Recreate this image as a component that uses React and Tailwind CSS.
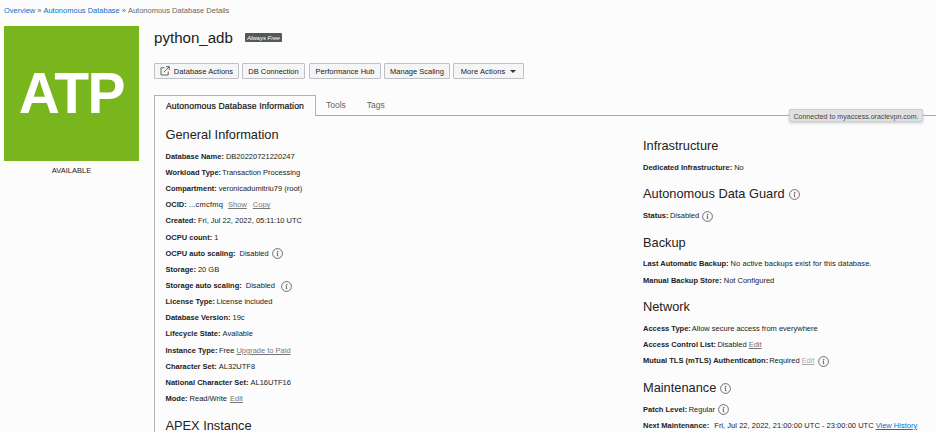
import React from "react";

function Info({ className = "" }) {
  return (
    <svg className={"shrink-0 w-[11px] h-[11px] " + className} viewBox="0 0 11 11" fill="none">
      <circle cx="5.5" cy="5.5" r="4.9" stroke="#4a4a4a" strokeWidth="0.8" />
      <circle cx="5.8" cy="3.4" r="0.6" fill="#444" />
      <path d="M4.7 4.9h1L5.2 7.7h1.1" stroke="#444" strokeWidth="0.8" />
    </svg>
  );
}

function Row({ label, children }) {
  return (
    <div className="flex h-[16.17px] items-center whitespace-pre pt-[1px] text-[7.5px] leading-[10px]">
      <span className="font-bold">{label}:</span>
      {children}
    </div>
  );
}

function Val({ children, className = "ml-[2px]" }) {
  return <span className={className}>{children}</span>;
}

function Heading({ children }) {
  return (
    <h2 className="flex h-[32.2px] items-center whitespace-nowrap pt-[6px] text-[12.8px] leading-[16px]">
      {children}
    </h2>
  );
}

function Button({ children, className }) {
  return (
    <button
      className={
        "flex h-[16px] items-center justify-center whitespace-nowrap rounded-[1px] border border-[#bcc0c8] bg-[#f5f5f5] pt-[1px] text-[7.5px] leading-[10px] " +
        className
      }
    >
      {children}
    </button>
  );
}

const link = "ml-[2px] text-[#777] underline";

export default function App() {
  return (
    <div className="relative h-[432px] w-[936px] overflow-hidden bg-[#fcfcfc] font-['Liberation_Sans',Arial,sans-serif] text-[#222]">
      <nav className="flex h-[20px] items-center gap-[2px] whitespace-nowrap pl-[4px] pt-[1px] text-[7.5px] leading-[10px] text-[#666]">
        <a className="text-[#0572ce]">Overview</a>
        <span>»</span>
        <a className="text-[#0572ce]">Autonomous Database</a>
        <span>»</span>
        <span>Autonomous Database Details</span>
      </nav>
      <div className="flex pt-[6px]">
        <aside className="ml-[4px] w-[135px] shrink-0">
          <div className="flex h-[135px] items-center justify-center bg-[#79b51c] text-[57px] font-bold leading-none tracking-[-1.5px] text-white">
            ATP
          </div>
          <div className="pt-[5px] text-center text-[7.5px] leading-[10px]">AVAILABLE</div>
        </aside>
        <main className="ml-[15px] w-[782px] shrink-0">
          <div className="flex h-[23px] items-center">
            <h1 className="text-[15.1px] leading-[18px]">python_adb</h1>
            <span className="ml-[12px] flex h-[9px] w-[37px] items-center justify-center rounded-[1px] bg-[#555759] text-[6px] italic leading-[8px] text-white">
              Always Free
            </span>
          </div>
          <div className="flex pt-[14px]">
            <Button className="w-[85px]">
              <svg className="mb-[1px] mr-[4px] h-[10px] w-[10px]" viewBox="0 0 10 10" fill="none" stroke="#555" strokeWidth="0.9">
                <path d="M4.5 1.8H1v7.2h7.2V5.5M3.8 6.2L9.2.8M6 .7h3.3V4" />
              </svg>
              <span className="tracking-[0.06px]">Database Actions</span>
            </Button>
            <Button className="ml-[3px] w-[63px]">DB Connection</Button>
            <Button className="ml-[4px] w-[72px]">Performance Hub</Button>
            <Button className="ml-[3px] w-[66px]">Manage Scaling</Button>
            <Button className="ml-[3px] w-[71px]">
              <span className="tracking-[0.1px]">More Actions</span>
              <svg className="ml-[5px] h-[3px] w-[6px]" viewBox="0 0 6 3">
                <path d="M0 0h6L3 3z" fill="#333" />
              </svg>
            </Button>
          </div>
          <div className="mt-[16px] flex h-[21px]">
            <div className="flex w-[162px] items-center justify-center border border-b-0 border-[#b0b2b4] text-[8.6px] leading-[10px] tracking-[0.17px] text-[#111]">
              <span className="[-webkit-text-stroke:0.2px_#111]">Autonomous Database Information</span>
            </div>
            <div className="flex flex-1 items-center border-b border-[#a5a7a9] pl-[10px] text-[8.5px] leading-[10px] text-[#666]">
              <span>Tools</span>
              <span className="ml-[21px]">Tags</span>
            </div>
          </div>
          <div className="flex h-[320px] border-l border-[#b0b2b4] pl-[10.5px]">
            <section className="w-[477.5px] shrink-0">
              <Heading>General Information</Heading>
              <Row label="Database Name"><Val>DB20220721220247</Val></Row>
              <Row label="Workload Type"><Val className="ml-[1px]">Transaction Processing</Val></Row>
              <Row label="Compartment"><Val>veronicadumitriu79 (root)</Val></Row>
              <Row label="OCID">
                <Val className="ml-[2px] tracking-[0.2px]">...cmcfmq</Val>
                <a className="ml-[5px] text-[#777] underline">Show</a>
                <a className="ml-[6px] text-[#777] underline">Copy</a>
              </Row>
              <Row label="Created"><Val>Fri, Jul 22, 2022, 05:11:10 UTC</Val></Row>
              <Row label="OCPU count"><Val>1</Val></Row>
              <Row label="OCPU auto scaling"><Val className="ml-[4px]">Disabled</Val><Info className="ml-[3px]" /></Row>
              <Row label="Storage"><Val>20 GB</Val></Row>
              <Row label="Storage auto scaling"><Val className="ml-[4px]">Disabled</Val><Info className="ml-[6px]" /></Row>
              <Row label="License Type"><Val className="ml-[1.5px]">License included</Val></Row>
              <Row label="Database Version"><Val>19c</Val></Row>
              <Row label="Lifecycle State"><Val>Available</Val></Row>
              <Row label="Instance Type"><Val className="ml-[1.5px]">Free</Val><a className={link}>Upgrade to Paid</a></Row>
              <Row label="Character Set"><Val>AL32UTF8</Val></Row>
              <Row label="National Character Set"><Val>AL16UTF16</Val></Row>
              <Row label="Mode"><Val>Read/Write</Val><a className="ml-[3px] text-[#777] underline">Edit</a></Row>
              <Heading>APEX Instance</Heading>
            </section>
            <section className="pt-[11px]">
              <Heading>Infrastructure</Heading>
              <Row label="Dedicated Infrastructure"><Val>No</Val></Row>
              <Heading>Autonomous Data Guard<Info className="ml-[4px] mt-[1px]" /></Heading>
              <Row label="Status"><Val className="ml-[1.5px]">Disabled</Val><Info className="ml-[3px]" /></Row>
              <Heading>Backup</Heading>
              <Row label="Last Automatic Backup"><Val className="ml-[2px] tracking-[0.06px]">No active backups exist for this database.</Val></Row>
              <Row label="Manual Backup Store"><Val>Not Configured</Val></Row>
              <Heading>Network</Heading>
              <Row label="Access Type"><Val className="ml-[1px]">Allow secure access from everywhere</Val></Row>
              <Row label="Access Control List"><Val className="ml-[1.5px]">Disabled</Val><a className={link}>Edit</a></Row>
              <Row label="Mutual TLS (mTLS) Authentication">
                <Val className="ml-[1px]">Required</Val>
                <a className="ml-[2px] text-[#aaa] underline">Edit</a>
                <Info className="ml-[3px]" />
              </Row>
              <Heading>Maintenance<Info className="ml-[4px] mt-[1px]" /></Heading>
              <Row label="Patch Level"><Val className="ml-[1.5px]">Regular</Val><Info className="ml-[3px]" /></Row>
              <Row label="Next Maintenance">
                <Val className="ml-[5px] tracking-[0.03px]">Fri, Jul 22, 2022, 21:00:00 UTC - 23:00:00 UTC</Val>
                <a className="ml-[2px] text-[#0572ce] underline">View History</a>
              </Row>
            </section>
          </div>
        </main>
      </div>
      <div className="absolute left-[789px] top-[109px] flex h-[13px] w-[134px] items-center justify-center whitespace-nowrap rounded-[2px] border border-[#cfcfcf] bg-[#e0e0e0] pt-[1px] text-[7px] leading-[9px] tracking-[0.03px] text-[#444] shadow-[0_1px_3px_rgba(0,0,0,0.2)]">
        Connected to myaccess.oraclevpn.com.
      </div>
    </div>
  );
}
